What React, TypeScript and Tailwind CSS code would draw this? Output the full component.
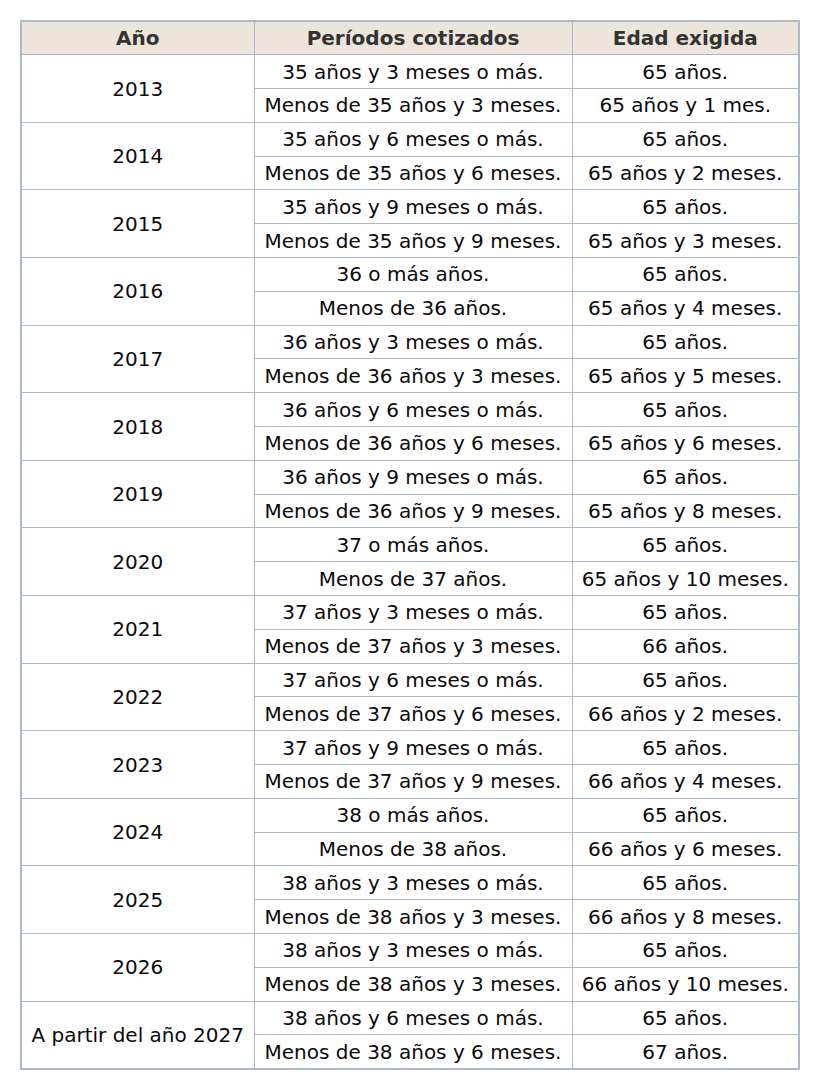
const rows: [string, string, string, string, string][] = [
  ["2013", "35 años y 3 meses o más.", "65 años.", "Menos de 35 años y 3 meses.", "65 años y 1 mes."],
  ["2014", "35 años y 6 meses o más.", "65 años.", "Menos de 35 años y 6 meses.", "65 años y 2 meses."],
  ["2015", "35 años y 9 meses o más.", "65 años.", "Menos de 35 años y 9 meses.", "65 años y 3 meses."],
  ["2016", "36 o más años.", "65 años.", "Menos de 36 años.", "65 años y 4 meses."],
  ["2017", "36 años y 3 meses o más.", "65 años.", "Menos de 36 años y 3 meses.", "65 años y 5 meses."],
  ["2018", "36 años y 6 meses o más.", "65 años.", "Menos de 36 años y 6 meses.", "65 años y 6 meses."],
  ["2019", "36 años y 9 meses o más.", "65 años.", "Menos de 36 años y 9 meses.", "65 años y 8 meses."],
  ["2020", "37 o más años.", "65 años.", "Menos de 37 años.", "65 años y 10 meses."],
  ["2021", "37 años y 3 meses o más.", "65 años.", "Menos de 37 años y 3 meses.", "66 años."],
  ["2022", "37 años y 6 meses o más.", "65 años.", "Menos de 37 años y 6 meses.", "66 años y 2 meses."],
  ["2023", "37 años y 9 meses o más.", "65 años.", "Menos de 37 años y 9 meses.", "66 años y 4 meses."],
  ["2024", "38 o más años.", "65 años.", "Menos de 38 años.", "66 años y 6 meses."],
  ["2025", "38 años y 3 meses o más.", "65 años.", "Menos de 38 años y 3 meses.", "66 años y 8 meses."],
  ["2026", "38 años y 3 meses o más.", "65 años.", "Menos de 38 años y 3 meses.", "66 años y 10 meses."],
  ["A partir del año 2027", "38 años y 6 meses o más.", "65 años.", "Menos de 38 años y 6 meses.", "67 años."],
];

const cell = "border border-[#aeb8c6] text-center align-middle p-0 h-[33.8px] whitespace-nowrap";

export default function App() {
  return (
    <div className="bg-white w-[820px] h-[1086px] pt-[20px] pl-[20px]" style={{ fontFamily: '"DejaVu Sans", Verdana, sans-serif' }}>
      <table className="border-collapse border-2 border-[#aeb8c6] w-[778px] table-fixed text-[20px] leading-[24px] text-[#0a0a0a]">
        <colgroup>
          <col className="w-[233px]" />
          <col className="w-[318px]" />
          <col className="w-[227px]" />
        </colgroup>
        <thead>
          <tr className="bg-[#ede5dc] text-[#333] font-bold">
            <th className={cell}>Año</th>
            <th className={cell}>Períodos cotizados</th>
            <th className={cell}>Edad exigida</th>
          </tr>
        </thead>
        <tbody>
          {rows.map(([year, p1, e1, p2, e2]) => (
            <>
              <tr key={year + "a"}>
                <td rowSpan={2} className={cell}>{year}</td>
                <td className={cell}>{p1}</td>
                <td className={cell}>{e1}</td>
              </tr>
              <tr key={year + "b"}>
                <td className={cell}>{p2}</td>
                <td className={cell}>{e2}</td>
              </tr>
            </>
          ))}
        </tbody>
      </table>
    </div>
  );
}
